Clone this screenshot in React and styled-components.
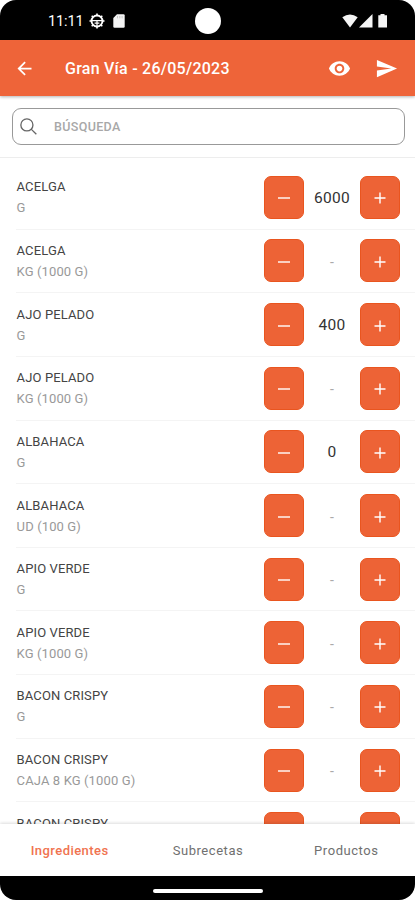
import React from 'react';
import styled, { createGlobalStyle } from 'styled-components';
import { MdArrowBack, MdVisibility, MdSend } from 'react-icons/md';

const GlobalStyle = createGlobalStyle`
  * {
    box-sizing: border-box;
  }

  body {
    margin: 0;
    background: white;
    font-family: Roboto, "Liberation Sans", sans-serif;
  }
`;

const Pantalla = styled.div`
  width: 415px;
  height: 900px;
  display: flex;
  flex-direction: column;
  overflow: hidden;
`;

const BarraEstado = styled.div`
  height: 40px;
  flex-shrink: 0;
  display: grid;
  grid-template-columns: 1fr 26px 1fr;
  align-items: center;
  padding: 1px 27px 0 48px;
  background: black;
  color: white;
  border-radius: 16px 16px 0 0;
`;

const GrupoEstado = styled.div`
  display: flex;
  align-items: center;
  justify-content: ${props => (props.$derecha ? 'flex-end' : 'flex-start')};
`;

const Hora = styled.span`
  width: 41px;
  padding-top: 1px;
  font-size: 14.5px;
  letter-spacing: -0.1px;
`;

const Camara = styled.div`
  width: 26px;
  height: 26px;
  margin-left: -10.5px;
  border-radius: 50%;
  background: white;
`;

const Cabecera = styled.header`
  height: 56px;
  flex-shrink: 0;
  display: flex;
  align-items: center;
  padding: 0 17px 0 14px;
  background: #ee6439;
  color: white;
  box-shadow: 0 1px 3px rgba(0, 0, 0, 0.3);
  z-index: 1;
`;

const Titulo = styled.h1`
  flex: 1;
  margin: 0 0 0 30px;
  font-size: 16px;
  font-weight: 500;
  letter-spacing: 0.25px;
`;

const BotonIcono = styled.button`
  display: flex;
  padding: 0;
  margin-left: ${props => props.$margen || 0}px;
  border: none;
  background: none;
  color: inherit;
`;

const ZonaBusqueda = styled.div`
  height: 62px;
  flex-shrink: 0;
  padding: 12px 10px 0 12px;
  border-bottom: 1px solid #ededed;
`;

const CajaBusqueda = styled.label`
  height: 37px;
  display: flex;
  align-items: center;
  padding-left: 7px;
  border: 1px solid #999;
  border-radius: 9px;
`;

const CampoBusqueda = styled.input`
  flex: 1;
  margin-left: 17px;
  padding: 0;
  border: none;
  outline: none;
  background: none;
  font-family: inherit;
  font-size: 12.5px;
  font-weight: 500;
  letter-spacing: 0.35px;

  &::placeholder {
    color: #a8a8a8;
    opacity: 1;
  }
`;

const Lista = styled.main`
  flex: 1;
  min-height: 0;
  padding-top: 8px;
  overflow: hidden;
`;

const Fila = styled.div`
  height: 63.65px;
  display: flex;
  align-items: center;
  margin-left: 16px;
  padding-right: 15px;
  border-bottom: 1px solid #f4f4f4;
`;

const Detalles = styled.div`
  flex: 1;
  padding-left: 0.6px;
  font-size: 13px;
  line-height: 21px;
  letter-spacing: 0.12px;
`;

const Nombre = styled.div`
  color: #444;
`;

const Unidad = styled.div`
  min-height: 21px;
  color: #999;
`;

const BotonCantidad = styled.button`
  width: 40px;
  height: 43px;
  display: flex;
  align-items: center;
  justify-content: center;
  padding: 2px 0 0;
  border: 1px solid #e9551f;
  border-radius: 7px;
  background: #ed6336;
`;

const Cantidad = styled.span`
  width: 56px;
  padding-top: ${props => (props.$vacia ? 2 : 1)}px;
  font-size: ${props => (props.$vacia ? 14 : 15.5)}px;
  letter-spacing: 0.3px;
  text-align: center;
  color: ${props => (props.$vacia ? '#aaa' : '#333')};
`;

const Pestanas = styled.nav`
  height: 52px;
  flex-shrink: 0;
  display: grid;
  grid-template-columns: repeat(3, 1fr);
  background: white;
  box-shadow: 0 -1px 3px rgba(0, 0, 0, 0.14);
  z-index: 1;
`;

const Pestana = styled.button`
  padding: 0 0 0 1px;
  border: none;
  background: none;
  font-family: inherit;
  font-size: 13px;
  font-weight: ${props => (props.$activa ? 500 : 400)};
  letter-spacing: ${props => (props.$activa ? 0.45 : 0.55)}px;
  color: ${props => (props.$activa ? '#f07350' : '#707070')};
`;

const BarraSistema = styled.div`
  height: 24px;
  flex-shrink: 0;
  display: flex;
  align-items: center;
  justify-content: center;
  padding-top: 5px;
  background: black;
  border-radius: 0 0 16px 16px;
`;

const Indicador = styled.div`
  width: 110px;
  height: 4px;
  border-radius: 2px;
  background: white;
`;

const Tarjeta = styled.svg`
  margin-left: 8px;
`;

const ingredientes = [
  { nombre: 'ACELGA', unidad: 'G', cantidad: 6000 },
  { nombre: 'ACELGA', unidad: 'KG (1000 G)' },
  { nombre: 'AJO PELADO', unidad: 'G', cantidad: 400 },
  { nombre: 'AJO PELADO', unidad: 'KG (1000 G)' },
  { nombre: 'ALBAHACA', unidad: 'G', cantidad: 0 },
  { nombre: 'ALBAHACA', unidad: 'UD (100 G)' },
  { nombre: 'APIO VERDE', unidad: 'G' },
  { nombre: 'APIO VERDE', unidad: 'KG (1000 G)' },
  { nombre: 'BACON CRISPY', unidad: 'G' },
  { nombre: 'BACON CRISPY', unidad: 'CAJA 8 KG (1000 G)' },
  { nombre: 'BACON CRISPY', cantidad: '' },
];

const pestanas = ['Ingredientes', 'Subrecetas', 'Productos'];

const IconoSigno = ({ mas }) => (
  <svg width="12" height="12" viewBox="0 0 12 12" stroke="white" strokeWidth="1.4">
    <path d={mas ? 'M0.5 6H11.5M6 0.5V11.5' : 'M0 6H12'} />
  </svg>
);

const IconoLupa = () => (
  <svg width="17" height="17" viewBox="0 0 18 18" fill="none" stroke="#666" strokeWidth="1.4">
    <circle cx="7.3" cy="7.3" r="6.4" />
    <path d="M11.8 11.8L17.3 17.3" />
  </svg>
);

const IconoSistema = () => (
  <svg width="16" height="16" viewBox="0 0 16 16" fill="none" stroke="white">
    <circle cx="8" cy="8" r="5.5" strokeWidth="1.9" />
    <path d="M8 0.5V2.5M8 13.5V15.5M0.5 8H2.5M13.5 8H15.5M2.7 2.7L4 4M12 4L13.3 2.7M2.7 13.3L4 12M12 12L13.3 13.3" strokeWidth="1.6" />
    <path d="M3 7.6H13M8 7.6V13M5.6 10.2H10.4" strokeWidth="1.2" />
  </svg>
);

const IconoTarjeta = () => (
  <Tarjeta width="12" height="14" viewBox="0 0 12 14">
    <path d="M4 0.3H10.5Q11.7 0.3 11.7 1.5V12.5Q11.7 13.7 10.5 13.7H1.5Q0.3 13.7 0.3 12.5V4Z" fill="#f3f3f3" />
    <path d="M4.5 2V4.3M6.8 2V4.3M9.1 2V4.3" stroke="#bbb" strokeWidth="0.8" />
  </Tarjeta>
);

const IconosRed = () => (
  <svg width="46" height="14" viewBox="0 0 46 14" fill="#f5f5f5">
    <path d="M0.3 3.3Q8 -2.5 15.7 3.3L8 13.5Z" />
    <path d="M30.5 0V13.5H17Z" />
    <path d="M38.5 1.3V0H42.5V1.3H45V13.5H36.3V1.3Z" />
  </svg>
);

const FilaIngrediente = ({ item }) => {
  const vacia = item.cantidad === undefined;

  return (
    <Fila>
      <Detalles>
        <Nombre>{item.nombre}</Nombre>
        <Unidad>{item.unidad}</Unidad>
      </Detalles>
      <BotonCantidad aria-label="Restar">
        <IconoSigno />
      </BotonCantidad>
      <Cantidad $vacia={vacia}>{vacia ? '-' : item.cantidad}</Cantidad>
      <BotonCantidad aria-label="Sumar">
        <IconoSigno mas />
      </BotonCantidad>
    </Fila>
  );
};

const App = () => {
  return (
    <Pantalla>
      <GlobalStyle />
      <BarraEstado>
        <GrupoEstado>
          <Hora>11:11</Hora>
          <IconoSistema />
          <IconoTarjeta />
        </GrupoEstado>
        <Camara />
        <GrupoEstado $derecha>
          <IconosRed />
        </GrupoEstado>
      </BarraEstado>
      <Cabecera>
        <BotonIcono aria-label="Volver">
          <MdArrowBack size={21} />
        </BotonIcono>
        <Titulo>Gran Vía - 26/05/2023</Titulo>
        <BotonIcono aria-label="Ver">
          <MdVisibility size={23} />
        </BotonIcono>
        <BotonIcono aria-label="Enviar" $margen={24}>
          <MdSend size={23} />
        </BotonIcono>
      </Cabecera>
      <ZonaBusqueda>
        <CajaBusqueda>
          <IconoLupa />
          <CampoBusqueda placeholder="BÚSQUEDA" />
        </CajaBusqueda>
      </ZonaBusqueda>
      <Lista>
        {ingredientes.map((item, index) => (
          <FilaIngrediente key={index} item={item} />
        ))}
      </Lista>
      <Pestanas>
        {pestanas.map((texto, index) => (
          <Pestana key={texto} $activa={index === 0}>{texto}</Pestana>
        ))}
      </Pestanas>
      <BarraSistema>
        <Indicador />
      </BarraSistema>
    </Pantalla>
  );
};

export default App;
